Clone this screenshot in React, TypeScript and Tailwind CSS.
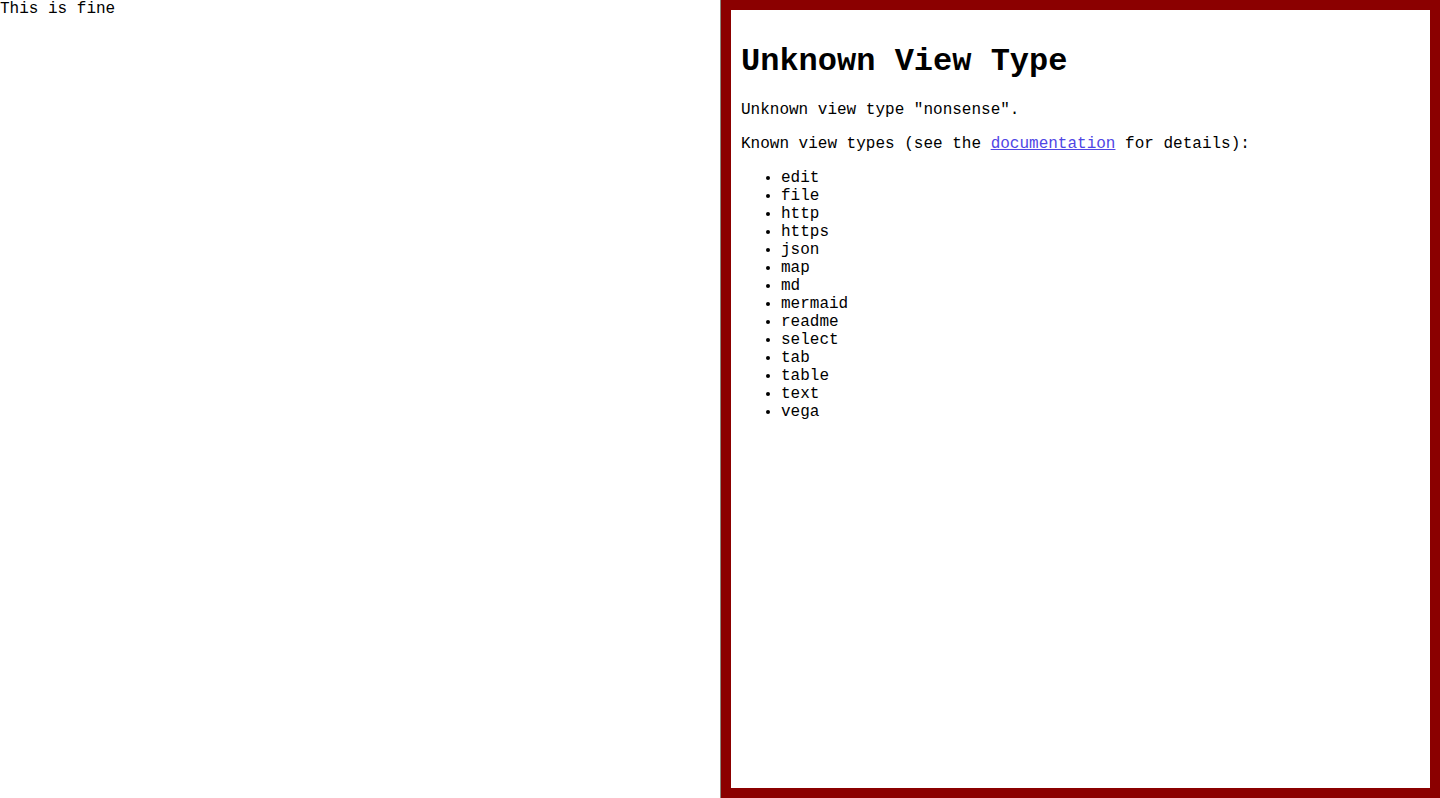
import React from "react";

const types = ["edit","file","http","https","json","map","md","mermaid","readme","select","tab","table","text","vega"];

export default function App() {
  return (
    <div className="flex h-[798px] w-[1440px] bg-white text-black text-[16px] leading-normal" style={{ fontFamily: '"Liberation Mono", monospace' }}>
      <div className="w-[720px] shrink-0">
        <div className="leading-[18px]">This is fine</div>
      </div>
      <div className="w-px shrink-0 bg-[#8a8a80]" />
      <div className="flex-1 border-[10px] border-[#8b0000] px-[10px] pt-[13px] overflow-hidden">
        <h1 className="mt-[21px] mb-[21px] text-[32px] font-bold leading-[36px]">Unknown View Type</h1>
        <p className="leading-[18px] my-4">Unknown view type "nonsense".</p>
        <p className="leading-[18px] my-4">Known view types (see the <a href="#" className="text-[#4f46e5] underline">documentation</a> for details):</p>
        <ul className="list-disc pl-10 my-4 leading-[18px]">
          {types.map((t) => (
            <li key={t}>{t}</li>
          ))}
        </ul>
      </div>
    </div>
  );
}
